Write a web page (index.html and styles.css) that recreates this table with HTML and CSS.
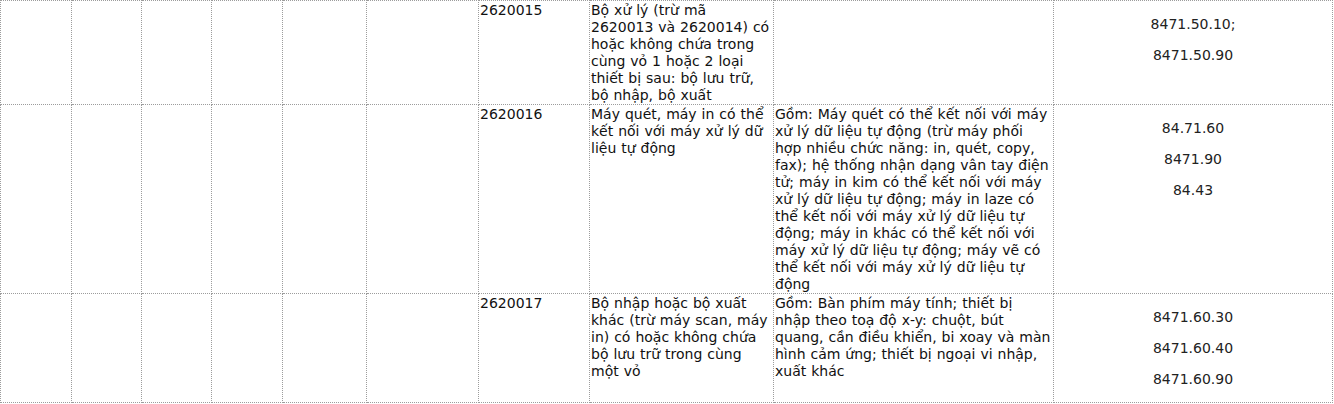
FILE: index.html
```html
<!DOCTYPE html>
<html lang="vi">
<head>
<meta charset="utf-8">
<title>Bảng mã</title>
<link rel="stylesheet" href="styles.css">
</head>
<body>
<table class="grid">
  <colgroup>
    <col class="c1"><col class="c2"><col class="c3"><col class="c4"><col class="c5">
    <col class="c6"><col class="c7"><col class="c8"><col class="c9"><col class="c10">
  </colgroup>
  <tbody>
    <tr>
      <td></td><td></td><td></td><td></td><td></td><td></td>
      <td>2620015</td>
      <td>Bộ xử lý (trừ mã 2620013 và 2620014) có hoặc không chứa trong cùng vỏ 1 hoặc 2 loại thiết bị sau: bộ lưu trữ, bộ nhập, bộ xuất</td>
      <td></td>
      <td class="codes"><p>8471.50.10;</p><p>8471.50.90</p></td>
    </tr>
    <tr>
      <td></td><td></td><td></td><td></td><td></td><td></td>
      <td>2620016</td>
      <td>Máy quét, máy in có thể kết nối với máy xử lý dữ liệu tự động</td>
      <td>Gồm: Máy quét có thể kết nối với máy xử lý dữ liệu tự động (trừ máy phối hợp nhiều chức năng: in, quét, copy, fax); hệ thống nhận dạng vân tay điện tử; máy in kim có thể kết nối với máy xử lý dữ liệu tự động; máy in laze có thể kết nối với máy xử lý dữ liệu tự động; máy in khác có thể kết nối với máy xử lý dữ liệu tự động; máy vẽ có thể kết nối với máy xử lý dữ liệu tự động</td>
      <td class="codes"><p>84.71.60</p><p>8471.90</p><p>84.43</p></td>
    </tr>
    <tr>
      <td></td><td></td><td></td><td></td><td></td><td></td>
      <td>2620017</td>
      <td>Bộ nhập hoặc bộ xuất khác (trừ máy scan, máy in) có hoặc không chứa bộ lưu trữ trong cùng một vỏ</td>
      <td>Gồm: Bàn phím máy tính; thiết bị nhập theo toạ độ x-y: chuột, bút quang, cần điều khiển, bi xoay và màn hình cảm ứng; thiết bị ngoại vi nhập, xuất khác</td>
      <td class="codes"><p>8471.60.30</p><p>8471.60.40</p><p>8471.60.90</p></td>
    </tr>
  </tbody>
</table>
</body>
</html>
```
FILE: styles.css
```css
html, body {
  margin: 0;
  padding: 0;
  background: #ffffff;
}
body {
  font-family: "DejaVu Sans", Verdana, sans-serif;
  font-size: 14px;
  line-height: 17px;
  word-spacing: 0.5px;
  color: #111111;
}
.grid {
  border-collapse: collapse;
  table-layout: fixed;
  width: 1332px;
}
.grid td {
  border: 1px dotted #9c9c9c;
  padding: 1px 1px 0 1px;
  vertical-align: top;
  overflow-wrap: break-word;
}
.c1 { width: 71px; }
.c2 { width: 70px; }
.c3 { width: 70px; }
.c4 { width: 71px; }
.c5 { width: 84px; }
.c6 { width: 112px; }
.c7 { width: 111px; }
.c8 { width: 184px; }
.c9 { width: 280px; }
.c10 { width: 279px; }
.codes p {
  margin: 14px 0;
  text-align: center;
  color: #222222;
}
```
